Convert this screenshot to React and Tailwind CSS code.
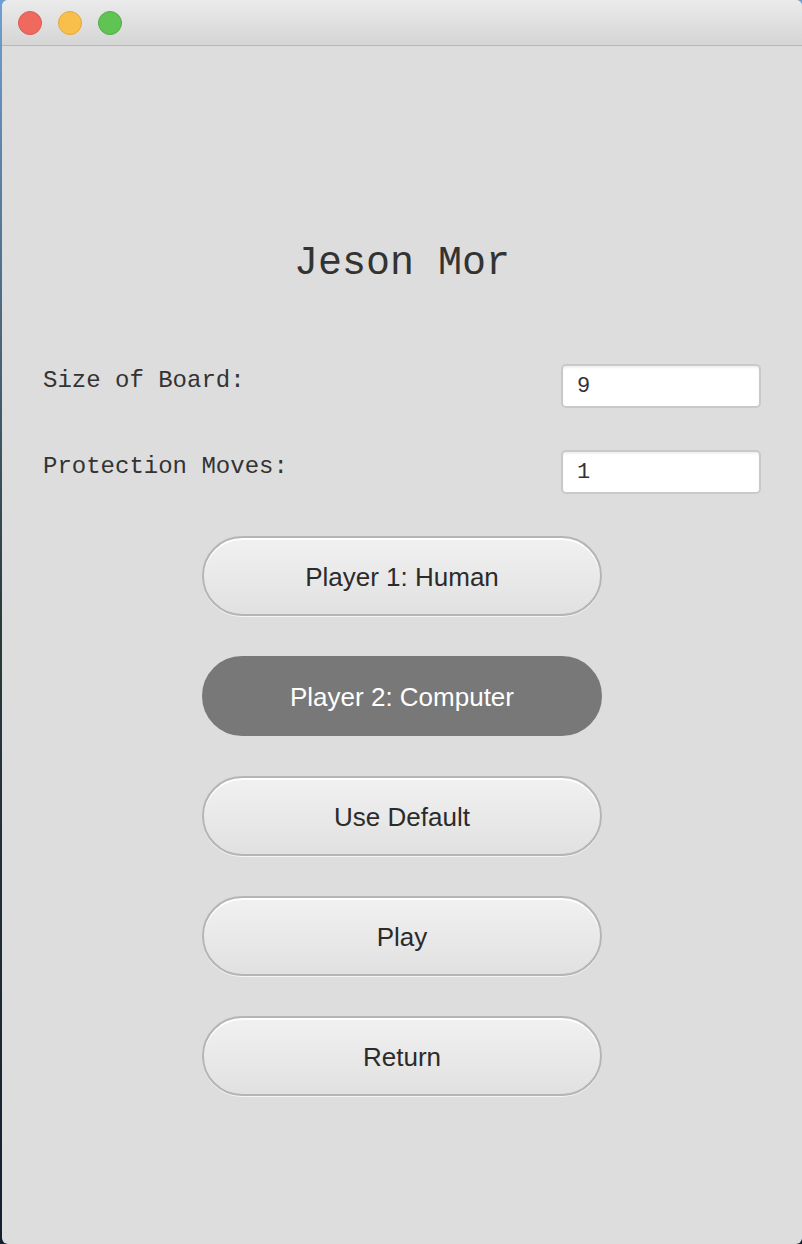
import React, { useState } from 'react';

const mono = { fontFamily: '"Liberation Mono", "Courier New", monospace' };

function Field({ label, value }) {
  return (
    <div className="flex items-start justify-between">
      <span className="text-[24px] leading-[28px] pt-[3px] text-[#333333]" style={mono}>{label}</span>
      <div className="w-[200px] h-[44px] bg-white border-2 border-[#c9c9c9] rounded-[5px] flex items-center pl-[14px] shadow-[inset_0_2px_2px_rgba(0,0,0,0.06)]">
        <span className="text-[22px] text-[#333333]" style={mono}>{value}</span>
      </div>
    </div>
  );
}

function PillButton({ label, active, onClick }) {
  return (
    <button
      onClick={onClick}
      className={`w-[400px] h-[80px] rounded-full text-[26px] pt-[2px] font-['Liberation_Sans',Arial,sans-serif] ${
        active
          ? 'bg-[#787878] text-white border-2 border-[#787878]'
          : 'bg-gradient-to-b from-[#f1f1f1] to-[#e1e1e1] text-[#2b2b2b] border-2 border-[#b5b5b5] shadow-[inset_0_2px_0_rgba(255,255,255,0.9),0_1px_0_rgba(255,255,255,0.7)]'
      }`}
    >
      {label}
    </button>
  );
}

export default function App() {
  const [player2Selected] = useState(true);

  return (
    <div className="w-[802px] h-[1244px] bg-gradient-to-b from-[#6f9fd2] via-[#2b3a3a] to-[#14202e] pl-[2px] overflow-hidden">
      <div className="w-[800px] h-[1244px] rounded-[6px] bg-[#dddddd] flex flex-col overflow-hidden">
        {/* Title bar */}
        <div className="h-[46px] shrink-0 bg-gradient-to-b from-[#ebebeb] to-[#d5d5d5] border-b border-[#b6b6b6] flex items-center gap-[16px] pl-[16px]">
          <span className="w-[24px] h-[24px] rounded-full bg-[#f0695e] border border-[#dc5a50]" />
          <span className="w-[24px] h-[24px] rounded-full bg-[#f9bf4b] border border-[#e0a93e]" />
          <span className="w-[24px] h-[24px] rounded-full bg-[#5fc453] border border-[#4fad45]" />
        </div>

        {/* Content */}
        <div className="flex-1 flex flex-col pt-[196px] px-[41px]">
          <h1 className="text-center text-[40px] leading-[40px] text-[#333333] pt-[2px]" style={mono}>Jeson Mor</h1>

          <div className="mt-[80px] flex flex-col gap-[42px]">
            <Field label="Size of Board:" value="9" />
            <Field label="Protection Moves:" value="1" />
          </div>

          <div className="mt-[42px] flex flex-col items-center gap-[40px]">
            <PillButton label="Player 1: Human" />
            <PillButton label="Player 2: Computer" active={player2Selected} />
            <PillButton label="Use Default" />
            <PillButton label="Play" />
            <PillButton label="Return" />
          </div>
        </div>
      </div>
    </div>
  );
}
